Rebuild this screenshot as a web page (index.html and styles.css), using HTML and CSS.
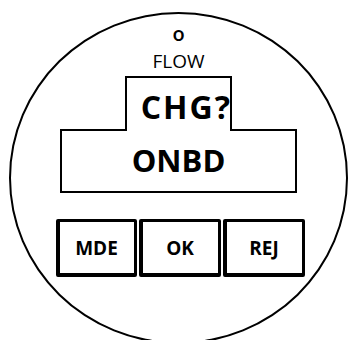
FILE: index.html
```html
<!DOCTYPE html>
<html>

<head>
  <meta name="viewport" content="width=device-width, initial-scale=1.0">
  <title>Flow Display</title>
  <link rel="stylesheet" href="styles.css">
</head>

<body>
  <div class="dial">
    <span class="indicator">o</span>
    <span class="label">FLOW</span>
    <div class="screen-top">
      <span class="prompt">CHG?</span>
    </div>
    <div class="screen">
      <span class="value">ONBD</span>
    </div>
    <div class="keys">
      <div class="key">MDE</div>
      <div class="key">OK</div>
      <div class="key">REJ</div>
    </div>
  </div>
</body>

</html>
```

FILE: styles.css
```css
html,
body {
  margin: 0;
  padding: 0;
  background-color: #fff;
  overflow: hidden;
  height: 100%;
}

body {
  font-family: "Open Sans", "DejaVu Sans", sans-serif;
  color: #000;
}

.dial {
  width: 335px;
  height: 328px;
  margin: 12px 0 0 9px;
  border: 2px solid #000;
  border-radius: 50%;
  display: flex;
  flex-direction: column;
  align-items: center;
}

.indicator {
  display: block;
  font-size: 20px;
  line-height: 20px;
  font-weight: 600;
  margin-top: 10px;
}

.label {
  display: block;
  font-size: 19px;
  line-height: 19px;
  margin-top: 8px;
}

.screen-top {
  width: 103px;
  height: 53px;
  margin-top: 5px;
  margin-bottom: -2px;
  border: 2px solid #000;
  border-bottom: none;
  background-color: #fff;
  position: relative;
  z-index: 1;
  display: flex;
  justify-content: flex-end;
}

.prompt {
  font-size: 32px;
  line-height: 32px;
  font-weight: 700;
  letter-spacing: 2px;
  margin-top: 13px;
  margin-right: -2px;
}

.screen {
  width: 233px;
  height: 60px;
  border: 2px solid #000;
  display: flex;
  justify-content: center;
}

.value {
  font-size: 31px;
  line-height: 31px;
  font-weight: 700;
  margin-top: 14px;
}

.keys {
  display: flex;
  gap: 2px;
  margin-top: 26px;
  margin-left: 3px;
}

.key {
  width: 74px;
  height: 51px;
  border: 3px solid #000;
  border-left-width: 4px;
  border-bottom-width: 4px;
  border-radius: 2px;
  display: flex;
  align-items: center;
  justify-content: center;
  font-size: 19px;
  font-weight: 700;
}

.key:nth-child(2),
.key:nth-child(3) {
  width: 75px;
}
```
